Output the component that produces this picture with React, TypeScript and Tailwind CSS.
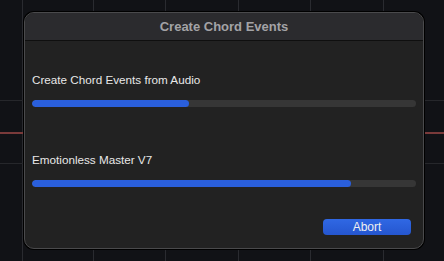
import React from 'react';

const gridX = [22, 93, 165, 238, 310, 383];

const ProgressRow: React.FC<{ label: string; value: number }> = ({ label, value }) => (
  <div className="flex flex-col gap-[12px]">
    <p className="text-[11.7px] leading-[16px] text-[#e8e8e8]">{label}</p>
    <div className="h-[7px] w-full rounded-full bg-[#363636] overflow-hidden">
      <div className="h-full rounded-full bg-[#2a5fdc]" style={{ width: `${value}%` }} />
    </div>
  </div>
);

export default function App() {
  return (
    <div
      className="relative w-[444px] h-[261px] overflow-hidden bg-[#111216]"
      style={{ fontFamily: '"Liberation Sans", Arial, sans-serif' }}
    >
      {/* timeline grid behind the sheet */}
      <div className="absolute inset-0">
        {gridX.map((x) => (
          <div key={x} className="absolute top-0 bottom-0 w-px bg-[#2a2b30]" style={{ left: x }} />
        ))}
        <div className="absolute left-0 right-0 top-[100px] h-px bg-[#26272b]" />
        <div className="absolute left-0 right-0 top-[163px] h-px bg-[#26272b]" />
        <div className="absolute left-0 right-0 top-[132px] h-[2px] bg-[#7a3a3a]" />
      </div>

      <div className="relative pt-[12px] pl-[24px]">
        <div className="w-[400px] h-[237px] rounded-[10px] border border-[#4a4a4c] bg-[#222222] overflow-hidden flex flex-col shadow-[0_0_0_1px_#000]">
          <div className="h-[28px] shrink-0 flex items-center justify-center bg-[#2b2b2e] border-b border-[#0f0f0f]">
            <span className="text-[13px] font-bold text-[#a3a3a6]">Create Chord Events</span>
          </div>
          <div className="flex flex-col px-[7px] pt-[31px]">
            <ProgressRow label="Create Chord Events from Audio" value={41} />
            <div className="h-[45px]" />
            <ProgressRow label="Emotionless Master V7" value={83} />
            <div className="flex justify-end pt-[32px] pr-[5px]">
              <button className="w-[88px] h-[16px] rounded-[4px] bg-gradient-to-b from-[#3068e4] to-[#2556cf] text-[12px] leading-[16px] text-[#f0f0f0]">
                Abort
              </button>
            </div>
          </div>
        </div>
      </div>
    </div>
  );
}
